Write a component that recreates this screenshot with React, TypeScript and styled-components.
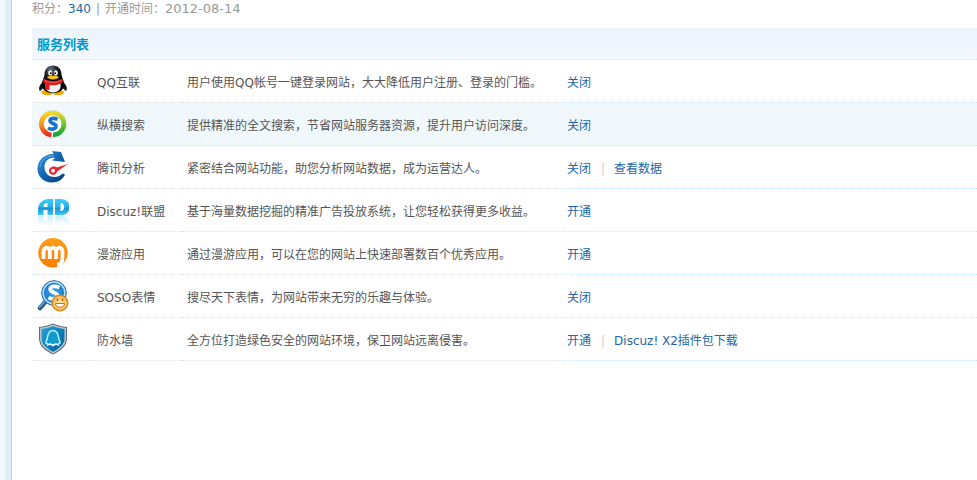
import React from "react";
import styled, { createGlobalStyle } from "styled-components";

const GlobalStyle = createGlobalStyle`
  body {
    margin: 0;
    background: #fff;
    color: #555;
    font: 12px/18px "DejaVu Sans", "Noto Sans CJK SC", sans-serif;
  }
`;

const Page = styled.div`
  display: flex;
  min-height: 100vh;
`;

const SideMargin = styled.div`
  flex: 0 0 5px;
  background: #f2f9fd;
`;

const SideRail = styled.div`
  flex: 0 0 6px;
  background: #deeffa;
  border-right: 1px solid #b5cfd9;
`;

const Main = styled.main`
  flex: 1;
  min-width: 0;
  padding-left: 20px;
`;

const Summary = styled.p`
  display: flex;
  height: 18px;
  margin: 0 0 10px;
  color: #999;
`;

const Points = styled.strong`
  font-weight: normal;
  color: #2366a8;
`;

const SummaryDivider = styled.span`
  margin: 0 5px;
`;

const OpenDate = styled.time`
  font-size: 13px;
`;

const ServiceTable = styled.table`
  width: 100%;
  table-layout: fixed;
  border-collapse: separate;
  border-spacing: 0;
`;

const Col = styled.col<{ $width?: number }>`
  width: ${({ $width }) => ($width ? `${$width}px` : "auto")};
`;

const TableTitle = styled.th`
  height: 29px;
  padding: 2px 5px 0;
  text-align: left;
  font-size: 13px;
  color: #0099cc;
  background: linear-gradient(#ecf4fd, #f4f8fe);
  border-bottom: 1px dotted #d5e9f8;
`;

const Cell = styled.td`
  padding: 4px 5px 0;
  white-space: nowrap;
  border-bottom: 1px dotted #cde6f7;
`;

const IconCell = styled(Cell)`
  height: 42px;
  padding: 0 5px;
`;

const Row = styled.tr<{ $active?: boolean }>`
  background: ${({ $active }) => ($active ? "#f0f8fc" : "#fff")};
`;

const Icon = styled.svg`
  display: block;
  width: 32px;
  height: 32px;
`;

const Action = styled.a`
  color: #2366a8;
  text-decoration: none;

  &:hover {
    text-decoration: underline;
  }
`;

const Divider = styled.span`
  margin: 0 9px 0 10px;
  color: #ccc;
`;

const PenguinIcon = () => (
  <Icon viewBox="0 0 32 32" aria-hidden="true">
    <defs>
      <radialGradient id="qq-body" cx=".4" cy=".15" r=".6">
        <stop offset="0" stopColor="#6a7180" />
        <stop offset=".5" stopColor="#151922" />
        <stop offset="1" stopColor="#000" />
      </radialGradient>
    </defs>
    <path d="M8 15C4 18 1 22 2.500 25.500c1.500 1 3-2 5-4zM24 15c4 3 7 7 5.500 10.500-1.500 1-3-2-5-4z" fill="#11141b" />
    <ellipse cx="10.500" cy="27.500" rx="6" ry="2.800" fill="#f7a800" />
    <ellipse cx="21" cy="27.500" rx="6" ry="2.800" fill="#f7a800" />
    <path d="M16 .5c-5.500 0-8.500 4-8.500 9C7.500 12 5 15 5 19c0 6 4.500 9 11 9s11-3 11-9c0-4-2.500-7-2.500-9.500 0-5-3-9-8.500-9z" fill="url(#qq-body)" />
    <path d="M8.500 18c-1 6 2 9.500 7.500 9.500s8.500-3.500 7.500-9.500c-4 2-11 2-15 0z" fill="#f0f1f4" />
    <ellipse cx="13.200" cy="8" rx="2" ry="2.700" fill="#fff" />
    <ellipse cx="18.800" cy="8" rx="2" ry="2.700" fill="#fff" />
    <circle cx="13.800" cy="8.300" r="1" fill="#111" />
    <circle cx="18.200" cy="8.300" r="1" fill="#111" />
    <path d="M10 12c3-1.700 9-1.700 12 0-1.500 3.200-10.500 3.200-12 0z" fill="#ffc41c" />
    <path d="M7 13.500c5 3.500 13 3.500 18 0l1 3.500c-3.500 3-9 3.700-13.500 3.200v4.800l-4.500-.5.500-6L6 17z" fill="#dd1a1a" />
    <path d="M7.500 15c5 3.200 12 3.200 17 0" fill="none" stroke="#f8564c" />
  </Icon>
);

const SearchRingIcon = () => (
  <Icon viewBox="0 0 32 32" aria-hidden="true">
    <defs>
      <linearGradient id="ring-right" x1="0" y1="0" x2="0" y2="1">
        <stop offset="0" stopColor="#e8d829" />
        <stop offset=".35" stopColor="#8dcb2c" />
        <stop offset="1" stopColor="#1ba340" />
      </linearGradient>
      <linearGradient id="ring-left" x1="0" y1="1" x2="0" y2="0">
        <stop offset="0" stopColor="#e62b20" />
        <stop offset=".4" stopColor="#f98920" />
        <stop offset="1" stopColor="#f4d62a" />
      </linearGradient>
    </defs>
    <circle cx="16" cy="16" r="14" fill="#fff" stroke="#d9e3d6" strokeWidth=".8" />
    <path d="M16 5.200a10.800 10.800 0 0 1 0 21.600" fill="none" stroke="url(#ring-right)" strokeWidth="4.800" />
    <path d="M14.500 26.800A10.800 10.800 0 0 1 16 5.200" fill="none" stroke="url(#ring-left)" strokeWidth="4.800" />
    <circle cx="16" cy="16" r="8.400" fill="#fff" />
    <path d="M20.500 11.500c-3-1.800-7-1.500-7.500 1-.4 3.500 6.500 2.500 6 6-.4 3-5 3.200-8 1.500" fill="none" stroke="#1673cb" strokeWidth="3.600" />
  </Icon>
);

const GaugeIcon = () => (
  <Icon viewBox="0 0 32 32" aria-hidden="true">
    <defs>
      <linearGradient id="gauge" x2="1" y2="1">
        <stop stopColor="#3794dc" />
        <stop offset=".5" stopColor="#1265b0" />
        <stop offset="1" stopColor="#073b7d" />
      </linearGradient>
    </defs>
    <path d="M15 0l9 1 4 10-13-1.500 3-2.500c-7-1.500-11 4.500-10.500 10 .5 9 12 12 18 5.500l2.500 1c-2 5-7 8-13 8C6.500 31.500.5 25.500.5 18c0-8 6-15 16-15z" fill="url(#gauge)" />
    <path d="M3 16c1-7.500 7-11.500 14-11" fill="none" stroke="#67b5ea" />
    <path d="M31 13l-11 7.500c-1 5-8 4-8-.5 0-4 5-5.500 8-3.500z" fill="#e9222c" />
    <circle cx="16" cy="19.700" r="1.900" fill="#fff" />
  </Icon>
);

const AdShape = () => (
  <>
    <path fillRule="evenodd" d="M0 16v-5C0 4 5 0 10.500 0H15v16H9.500v-5H5.500v5zM5.500 8h4V4C7 4 5.500 5.500 5.500 8z" />
    <path fillRule="evenodd" d="M17 0h6c11.500 0 11.500 16 0 16h-6zm5.500 4v8c5 0 5-8 0-8z" />
  </>
);

const AdIcon = () => (
  <Icon viewBox="0 0 32 32" aria-hidden="true">
    <defs>
      <linearGradient id="ad" x2="0" y2="16" gradientUnits="userSpaceOnUse">
        <stop stopColor="#3fccf9" />
        <stop offset=".5" stopColor="#23b5ec" />
        <stop offset=".56" stopColor="#1992cf" />
        <stop offset="1" stopColor="#3ac9f7" />
      </linearGradient>
      <linearGradient id="ad-fade" x2="0" y2="16" gradientUnits="userSpaceOnUse">
        <stop offset=".4" stopColor="#6acdf0" stopOpacity="0" />
        <stop offset="1" stopColor="#6acdf0" stopOpacity=".35" />
      </linearGradient>
    </defs>
    <g fill="url(#ad)" transform="translate(1 5)"><AdShape /></g>
    <g fill="url(#ad-fade)" transform="matrix(1 0 0 -1 1 38)"><AdShape /></g>
  </Icon>
);

const RoamIcon = () => (
  <Icon viewBox="0 0 32 32" aria-hidden="true">
    <defs>
      <linearGradient id="roam" x2="0" y2="1">
        <stop stopColor="#ff9d1c" />
        <stop offset="1" stopColor="#fa7d00" />
      </linearGradient>
    </defs>
    <circle cx="16" cy="15.800" r="14.700" fill="url(#roam)" />
    <path d="M6.500 22v-7.500c0-5 6.300-5 6.300 0V22M12.800 14.500c0-5 6.300-5 6.300 0V22M19.100 14.500c0-5 6.400-5 6.400 0V21c0 4-2 6.500-5.500 7" fill="none" stroke="#fff" strokeWidth="3.800" />
  </Icon>
);

const EmoticonIcon = () => (
  <Icon viewBox="0 0 32 32" aria-hidden="true">
    <defs>
      <radialGradient id="lens">
        <stop stopColor="#3faaf0" />
        <stop offset="1" stopColor="#1171c9" />
      </radialGradient>
      <radialGradient id="smile">
        <stop stopColor="#ffe9b0" />
        <stop offset="1" stopColor="#fbb748" />
      </radialGradient>
    </defs>
    <path d="M3 28l6-7" stroke="#2a577f" strokeWidth="4.500" strokeLinecap="round" />
    <path d="M2.500 27l5.500-6" stroke="#5e9fcf" strokeWidth="2" strokeLinecap="round" />
    <circle cx="17" cy="13" r="12.300" fill="url(#lens)" stroke="#1c66ae" />
    <circle cx="17" cy="13" r="10.900" fill="none" stroke="#b9e1f8" strokeWidth="1.500" />
    <path d="M22.500 7.500c-4-2-9-1.500-9.300 1.500-.2 4 8 3 7.300 7-.6 3.500-6 3.500-9 1.500" fill="none" stroke="#fff" strokeWidth="3.800" />
    <circle cx="23" cy="23" r="7.800" fill="url(#smile)" stroke="#d98518" strokeWidth="1.400" />
    <path d="M20.500 18.500v2.500M25.500 18.500v2.500" stroke="#a8610f" strokeWidth="1.500" />
    <path d="M18.500 23.500h9c0 5-9 5-9 0z" fill="#fff" stroke="#c07818" />
  </Icon>
);

const ShieldIcon = () => (
  <Icon viewBox="0 0 32 32" aria-hidden="true">
    <defs>
      <linearGradient id="shield" x2="1" y2="1">
        <stop stopColor="#2fa5d8" />
        <stop offset=".5" stopColor="#0c81bd" />
        <stop offset="1" stopColor="#075c93" />
      </linearGradient>
    </defs>
    <path d="M16 .5C11.500 2.500 7 3.500 2 4v11c0 8 6 12.500 14 16.500C24 27.500 30 23 30 15V4C25 3.500 20.500 2.500 16 .5z" fill="#56646e" />
    <path d="M16 2.200C11.500 4.200 7.500 5 3.700 5.500V15c0 7 5.300 10.700 12.300 14.700 7-4 12.300-7.700 12.300-14.700V5.500C24.500 5 20.500 4.200 16 2.200z" fill="url(#shield)" stroke="#b9c5cc" strokeWidth="1.600" />
    <path d="M11 20.500c-2 .5-3-1-1.300-3.500C11 14.500 10 7.500 16 7.500s5 7 6.300 9.500c1.700 2.500.7 4-1.300 3.500" fill="#129bd0" stroke="#b4efff" strokeWidth="1.500" />
    <path d="M10 22.500c2-2 4-1.500 6 0 2-1.500 4-2 6 0" fill="none" stroke="#e4faff" strokeWidth="1.700" />
  </Icon>
);

interface Service {
  name: string;
  description: string;
  actions: string[];
  icon: React.FC;
  active?: boolean;
}

const services: Service[] = [
  { name: "QQ互联", description: "用户使用QQ帐号一键登录网站，大大降低用户注册、登录的门槛。", actions: ["关闭"], icon: PenguinIcon },
  { name: "纵横搜索", description: "提供精准的全文搜索，节省网站服务器资源，提升用户访问深度。", actions: ["关闭"], icon: SearchRingIcon, active: true },
  { name: "腾讯分析", description: "紧密结合网站功能，助您分析网站数据，成为运营达人。", actions: ["关闭", "查看数据"], icon: GaugeIcon },
  { name: "Discuz!联盟", description: "基于海量数据挖掘的精准广告投放系统，让您轻松获得更多收益。", actions: ["开通"], icon: AdIcon },
  { name: "漫游应用", description: "通过漫游应用，可以在您的网站上快速部署数百个优秀应用。", actions: ["开通"], icon: RoamIcon },
  { name: "SOSO表情", description: "搜尽天下表情，为网站带来无穷的乐趣与体验。", actions: ["关闭"], icon: EmoticonIcon },
  { name: "防水墙", description: "全方位打造绿色安全的网站环境，保卫网站远离侵害。", actions: ["开通", "Discuz! X2插件包下载"], icon: ShieldIcon },
];

export default function App() {
  return (
    <>
      <GlobalStyle />
      <Page>
        <SideMargin />
        <SideRail />
        <Main>
          <Summary>
            积分：<Points>340</Points>
            <SummaryDivider>|</SummaryDivider>
            开通时间：<OpenDate dateTime="2012-08-14">2012-08-14</OpenDate>
          </Summary>
          <ServiceTable>
            <colgroup>
              <Col $width={60} />
              <Col $width={90} />
              <Col $width={380} />
              <Col />
            </colgroup>
            <thead>
              <tr>
                <TableTitle colSpan={4}>服务列表</TableTitle>
              </tr>
            </thead>
            <tbody>
              {services.map(({ name, description, actions, icon: ServiceIcon, active }) => (
                <Row key={name} $active={active}>
                  <IconCell><ServiceIcon /></IconCell>
                  <Cell>{name}</Cell>
                  <Cell>{description}</Cell>
                  <Cell>
                    {actions.map((label, index) => (
                      <React.Fragment key={label}>
                        {index > 0 && <Divider>|</Divider>}
                        <Action href="#">{label}</Action>
                      </React.Fragment>
                    ))}
                  </Cell>
                </Row>
              ))}
            </tbody>
          </ServiceTable>
        </Main>
      </Page>
    </>
  );
}
